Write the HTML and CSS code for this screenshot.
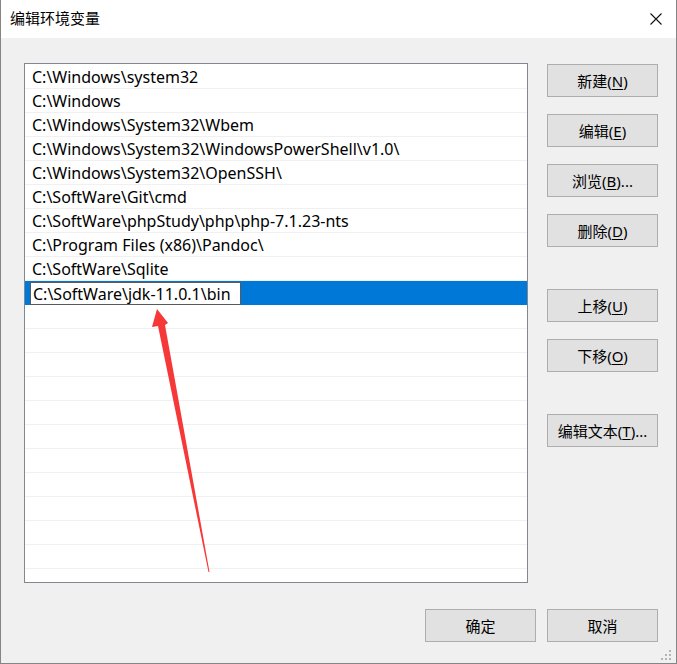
FILE: index.html
```html
<!DOCTYPE html>
<html lang="zh-CN">
<head>
<meta charset="utf-8">
<title>编辑环境变量</title>
<link rel="stylesheet" href="styles.css">
</head>
<body>
<div class="window">
  <div class="titlebar">
    <span class="title">编辑环境变量</span>
    <span class="close">
      <svg width="12" height="12" viewBox="0 0 12 12"><path d="M0.5 0.5 L11.5 11.5 M11.5 0.5 L0.5 11.5" stroke="#111" stroke-width="1.1" fill="none"/></svg>
    </span>
  </div>
  <div class="body">
    <div class="main">
      <div class="list">
        <div class="row">C:\Windows\system32</div>
        <div class="row">C:\Windows</div>
        <div class="row">C:\Windows\System32\Wbem</div>
        <div class="row">C:\Windows\System32\WindowsPowerShell\v1.0\</div>
        <div class="row">C:\Windows\System32\OpenSSH\</div>
        <div class="row">C:\SoftWare\Git\cmd</div>
        <div class="row">C:\SoftWare\phpStudy\php\php-7.1.23-nts</div>
        <div class="row">C:\Program Files (x86)\Pandoc\</div>
        <div class="row">C:\SoftWare\Sqlite</div>
        <div class="row selected"><span class="edit">C:\SoftWare\jdk-11.0.1\bin</span></div>
        <div class="row"></div><div class="row"></div><div class="row"></div><div class="row"></div>
        <div class="row"></div><div class="row"></div><div class="row"></div><div class="row"></div>
        <div class="row"></div><div class="row"></div><div class="row"></div><div class="row"></div>
      </div>
      <div class="side">
        <button class="btn">新建(<u>N</u>)</button>
        <button class="btn gap">编辑(<u>E</u>)</button>
        <button class="btn gap">浏览(<u>B</u>)...</button>
        <button class="btn gap">删除(<u>D</u>)</button>
        <button class="btn biggap">上移(<u>U</u>)</button>
        <button class="btn gap">下移(<u>O</u>)</button>
        <button class="btn biggap">编辑文本(<u>T</u>)...</button>
      </div>
    </div>
    <div class="footer">
      <button class="btn">确定</button>
      <button class="btn">取消</button>
    </div>
    <div class="grip">
      <svg width="11" height="11" viewBox="0 0 11 11" fill="#b4b4b4">
        <rect x="8" y="0" width="2" height="2"/>
        <rect x="4" y="4" width="2" height="2"/><rect x="8" y="4" width="2" height="2"/>
        <rect x="0" y="8" width="2" height="2"/><rect x="4" y="8" width="2" height="2"/><rect x="8" y="8" width="2" height="2"/>
      </svg>
    </div>
  </div>
  <svg class="arrow" width="677" height="664" viewBox="0 0 677 664">
    <polygon points="157,309 168,323 165,325 209.5,572 208.5,572 158,326 152,327" fill="#f63838"/>
  </svg>
</div>
</body>
</html>
```

FILE: styles.css
```css
* { box-sizing: border-box; }
html, body { margin: 0; padding: 0; background: #fff; }
body {
  font-family: "Noto Sans", "Noto Sans CJK SC", sans-serif;
  font-size: 15px;
  color: #000;
}
.window {
  position: relative;
  width: 677px;
  height: 664px;
  border-left: 1px solid #858585;
  border-right: 1px solid #858585;
  border-bottom: 1px solid #858585;
  display: flex;
  flex-direction: column;
  overflow: hidden;
}
.titlebar {
  height: 38px;
  background: #fff;
  display: flex;
  align-items: center;
  justify-content: space-between;
  padding: 0 14px 2px 9px;
  flex-shrink: 0;
}
.title {
  font-family: "Noto Sans CJK SC", sans-serif;
  font-size: 15px;
  line-height: 20px;
}
.close { display: flex; width: 12px; height: 12px; margin-top: 1px; }
.body {
  position: relative;
  flex: 1;
  background: #f0f0f0;
  padding: 25px 18px 0 23px;
  display: flex;
  flex-direction: column;
}
.main { display: flex; gap: 19px; }
.list {
  width: 504px;
  height: 520px;
  background: #fff;
  border: 1px solid #828790;
  padding-top: 1px;
  overflow: hidden;
  font-size: 16px;
}
.row {
  height: 24px;
  line-height: 25px;
  border-bottom: 1px solid #f0f0f0;
  padding-left: 7px;
  white-space: nowrap;
}
.row.selected {
  background: #0078d7;
  border-bottom-color: #0078d7;
  padding-left: 5px;
  padding-top: 1px;
  line-height: 21px;
}
.edit {
  display: inline-block;
  width: 211px;
  height: 23px;
  background: #fff;
  border: 1px solid #5a5a5a;
  padding-left: 2px;
  line-height: 22px;
  vertical-align: top;
}
.side {
  display: flex;
  flex-direction: column;
  padding-top: 1px;
}
.btn {
  width: 111px;
  height: 33px;
  background: #e1e1e1;
  border: 1px solid #adadad;
  font-family: "Noto Sans", "Noto Sans CJK SC", sans-serif;
  font-size: 15px;
  color: #000;
  padding: 0;
  margin: 0;
  line-height: 20px;
}
.btn u { text-underline-offset: 2px; }
.side .gap { margin-top: 17px; }
.side .biggap { margin-top: 42px; }
.footer {
  display: flex;
  justify-content: flex-end;
  gap: 11px;
  margin-top: 26px;
}
.grip {
  position: absolute;
  right: 4px;
  bottom: 2px;
  width: 11px;
  height: 11px;
  display: flex;
}
.arrow {
  position: absolute;
  left: -1px;
  top: 0;
  pointer-events: none;
}
```
